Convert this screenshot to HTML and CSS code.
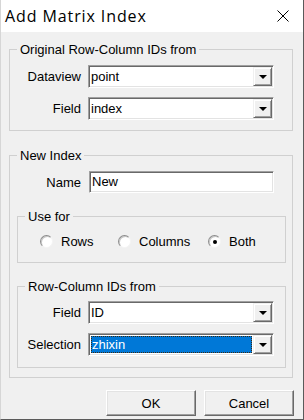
FILE: index.html
```html
<!DOCTYPE html>
<html lang="en">
<head>
  <meta charset="UTF-8" />
  <title>Add Matrix Index</title>
  <link rel="stylesheet" href="styles.css">
</head>
<body>
  <div class="window">
    <div class="titlebar">
      <span class="title">Add Matrix Index</span>
      <svg class="close" width="12" height="12" viewBox="0 0 12 12">
        <path d="M0.5 0.5 L11.5 11.5 M11.5 0.5 L0.5 11.5" stroke="#000" stroke-width="1" fill="none"/>
      </svg>
    </div>

    <div class="content">
      <fieldset class="group group-source">
        <legend>Original Row-Column IDs from</legend>
        <div class="row">
          <label>Dataview</label>
          <div class="combo">
            <span class="field">point</span>
            <span class="drop"><i class="arrow"></i></span>
          </div>
        </div>
        <div class="row row-next">
          <label>Field</label>
          <div class="combo">
            <span class="field">index</span>
            <span class="drop"><i class="arrow"></i></span>
          </div>
        </div>
      </fieldset>

      <fieldset class="group group-new">
        <legend>New Index</legend>
        <div class="row row-name">
          <label>Name</label>
          <div class="textbox">New</div>
        </div>

        <fieldset class="group group-use">
          <legend>Use for</legend>
          <div class="radios">
            <span class="radio"><i class="dot"></i>Rows</span>
            <span class="radio"><i class="dot"></i>Columns</span>
            <span class="radio"><i class="dot checked"></i>Both</span>
          </div>
        </fieldset>

        <fieldset class="group group-ids">
          <legend>Row-Column IDs from</legend>
          <div class="row">
            <label>Field</label>
            <div class="combo">
              <span class="field">ID</span>
              <span class="drop"><i class="arrow"></i></span>
            </div>
          </div>
          <div class="row row-next">
            <label>Selection</label>
            <div class="combo">
              <span class="field"><span class="selected">zhixin</span></span>
              <span class="drop"><i class="arrow"></i></span>
            </div>
          </div>
        </fieldset>
      </fieldset>

      <div class="buttons">
        <button>OK</button>
        <button>Cancel</button>
      </div>
    </div>
  </div>
</body>
</html>
```

FILE: styles.css
```css
body {
  margin: 0;
  font-family: "Liberation Sans", Arial, sans-serif;
  font-size: 13px;
  color: #000;
}

.window {
  width: 304px;
  height: 420px;
  box-sizing: border-box;
  background: #f0f0f0;
  border-right: 1px solid #5a5a5a;
  border-bottom: 1px solid #5a5a5a;
  border-left: 1px solid #d6d6d6;
  overflow: hidden;
}

.titlebar {
  height: 32px;
  background: #fff;
  display: flex;
  align-items: center;
  justify-content: space-between;
  padding: 0 14px 0 4px;
}

.title {
  font-family: "Open Sans", sans-serif;
  font-size: 16px;
  letter-spacing: 0.9px;
}

.close {
  display: block;
}

.content {
  padding: 0 10px 0 8px;
}

/* group boxes */
.group {
  margin: 0;
  padding-left: 0;
  border: 1px solid #d0d0d0;
  min-width: 0;
}

.group legend {
  margin-left: 7px;
  padding: 0 3px;
  line-height: 15px;
}

.group-source {
  margin-top: 10px;
  padding: 8px 18px 10px 0;
}

.group-new {
  margin-top: 17px;
  padding: 8px 6px 9px 0;
}

.group-new > .row-name,
.group-new > .group {
  margin-left: 7px;
}

.group-use {
  margin-top: 16px;
  padding: 10px 0 13px 0;
}

.group-ids {
  margin-top: 16px;
  padding: 7px 11px 11px 0;
}

.row {
  display: flex;
  align-items: center;
}

.row-next {
  margin-top: 9px;
}

.row label {
  flex: 1;
  text-align: right;
  padding-right: 7px;
}

.row-name {
  padding-right: 12px;
}

.row-name label {
  padding-right: 8px;
}

/* sunken boxes */
.combo, .textbox {
  box-sizing: border-box;
  border: 1px solid;
  border-color: #a0a0a0 #fff #fff #a0a0a0;
  box-shadow: inset 1px 1px #696969, inset -1px -1px #e3e3e3;
  background: #fff;
}

.combo {
  width: 186px;
  height: 23px;
  display: flex;
  padding: 1px;
}

.textbox {
  width: 185px;
  height: 22px;
  line-height: 20px;
  padding-left: 2px;
}

.field {
  flex: 1;
  display: flex;
  align-items: center;
  padding-left: 1px;
  background: #fff;
}

.selected {
  flex: 1;
  align-self: stretch;
  margin: 1px 1px 1px 0;
  border: 1px dotted #3b2a12;
  background: #0078d7;
  color: #fff;
  line-height: 15px;
}

.drop {
  width: 19px;
  box-sizing: border-box;
  background: #f0f0f0;
  border: 1px solid;
  border-color: #f0f0f0 #696969 #696969 #f0f0f0;
  box-shadow: inset 1px 1px #fff, inset -1px -1px #a0a0a0;
  display: flex;
  align-items: center;
  justify-content: center;
}

.arrow {
  width: 0;
  height: 0;
  border-top: 4px solid #000;
  border-left: 4px solid transparent;
  border-right: 4px solid transparent;
  margin-left: 1px;
}

/* radio buttons */
.radios {
  display: grid;
  grid-template-columns: 78px 90px auto;
  line-height: 15px;
  padding-left: 22px;
}

.radio {
  display: flex;
  align-items: center;
}

.dot {
  width: 13px;
  height: 13px;
  box-sizing: border-box;
  border-radius: 50%;
  border: 1px solid;
  border-color: #8c8c8c #f4f4f4 #f4f4f4 #8c8c8c;
  box-shadow: inset 1px 1px #c8c8c8;
  background: #fff;
  margin-right: 8px;
  position: relative;
}

.dot.checked::after {
  content: "";
  position: absolute;
  left: 4px;
  top: 4px;
  width: 4px;
  height: 4px;
  border-radius: 50%;
  background: #000;
}

/* buttons */
.buttons {
  display: flex;
  justify-content: flex-end;
  gap: 8px;
  margin-top: 12px;
  margin-right: -1px;
}

button {
  width: 90px;
  height: 26px;
  font-family: "Liberation Sans", Arial, sans-serif;
  font-size: 13px;
  color: #000;
  background: #f0f0f0;
  border: 1px solid;
  border-color: #fff #696969 #696969 #fff;
  box-shadow: inset -1px -1px #a0a0a0, inset 1px 1px #e3e3e3;
  padding: 0;
}
```
